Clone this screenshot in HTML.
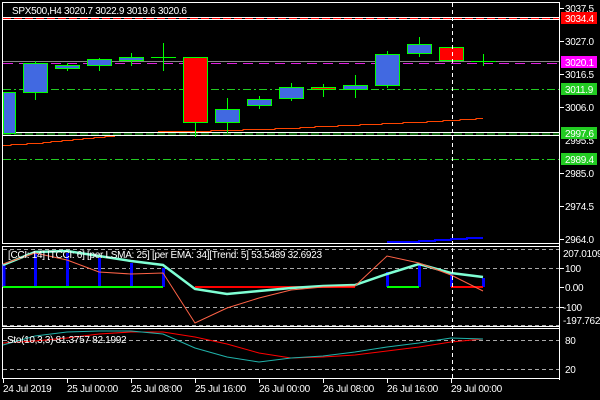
<!DOCTYPE html>
<html><head><meta charset="utf-8"><style>
html,body{margin:0;padding:0;background:#000;width:600px;height:400px;overflow:hidden}
svg{display:block}
text{font-family:"Liberation Sans",sans-serif;font-size:10px;fill:#fff;letter-spacing:-0.3px}
line,rect{shape-rendering:crispEdges}
</style></head><body>
<svg width="600" height="400" xmlns="http://www.w3.org/2000/svg">
<rect width="600" height="400" fill="#000"/>
<g fill="none" stroke="#fff" stroke-width="1">
<rect x="2.5" y="2.5" width="557" height="241"/>
<rect x="2.5" y="246.5" width="557" height="80"/>
<rect x="2.5" y="328.5" width="557" height="50"/>
</g>
<line x1="3" y1="17.5" x2="559" y2="17.5" stroke="#fff"/>
<line x1="3" y1="19.5" x2="559" y2="19.5" stroke="#fff"/>
<line x1="3" y1="18.5" x2="559" y2="18.5" stroke="#f00" stroke-dasharray="8,3"/>
<line x1="3" y1="61.5" x2="559" y2="61.5" stroke="#888"/>
<line x1="3" y1="63.5" x2="559" y2="63.5" stroke="#e020e0" stroke-dasharray="10,6"/>
<line x1="3" y1="89.5" x2="559" y2="89.5" stroke="#2c2" stroke-dasharray="8,3,2,3"/>
<line x1="3" y1="132.5" x2="559" y2="132.5" stroke="#fff"/>
<line x1="3" y1="135.5" x2="559" y2="135.5" stroke="#fff"/>
<line x1="3" y1="134" x2="559" y2="134" stroke="#2c2" stroke-dasharray="8,3"/>
<line x1="3" y1="159.5" x2="559" y2="159.5" stroke="#2c2" stroke-dasharray="8,3,2,3"/>
<g shape-rendering="crispEdges">
<polyline fill="none" stroke="#ff4500" stroke-width="1" points="3,145.5 11,145.5 11,144.5 27,144.5 27,143.5 43,143.5 43,142.5 51,142.5 51,141.5 62,141.5 62,140.5 73,140.5 73,139.5 83,139.5 83,138.5 94,138.5 94,137.5 105,137.5 105,136.5 115,136.5"/>
<polyline fill="none" stroke="#ff4500" stroke-width="1" points="158,131.5 211,131.5 211,130.5 243,130.5 243,129.5 275,129.5 275,128.5 300,128.5 300,127.5 315,127.5 315,126.5 338,126.5 338,125.5 360,125.5 360,124.5 382,124.5 382,123.5 403,123.5 403,122.5 427,122.5 427,121.5 443,121.5 443,120.5 460,120.5 460,119.5 476,119.5 476,118.5 483,118.5"/>
<polyline fill="none" stroke="#00f" stroke-width="2" points="387,242 419,242 419,241 435,241 435,240 451,240 451,239 467,239 467,238 483,238"/>
</g>
<g stroke="#0f0" stroke-width="1">
<rect x="3.5" y="92.5" width="12" height="41" fill="#4169e1"/>
<line x1="35.5" y1="61" x2="35.5" y2="100"/><rect x="23.5" y="63.5" width="24" height="29" fill="#4169e1"/>
<line x1="67.5" y1="63" x2="67.5" y2="71"/><rect x="55.5" y="65.5" width="24" height="3" fill="#4169e1"/>
<line x1="99.5" y1="58" x2="99.5" y2="71"/><rect x="87.5" y="59.5" width="24" height="6" fill="#4169e1"/>
<line x1="131.5" y1="53" x2="131.5" y2="66"/><rect x="119.5" y="57.5" width="24" height="3" fill="#4169e1"/>
<line x1="163.5" y1="43" x2="163.5" y2="71"/><line x1="151" y1="57.5" x2="176" y2="57.5"/>
<line x1="195.5" y1="122" x2="195.5" y2="137"/><rect x="183.5" y="57.5" width="24" height="65" fill="#f00"/>
<line x1="227.5" y1="98" x2="227.5" y2="133"/><rect x="215.5" y="109.5" width="24" height="13" fill="#4169e1"/>
<line x1="259.5" y1="96" x2="259.5" y2="109"/><rect x="247.5" y="99.5" width="24" height="6" fill="#4169e1"/>
<line x1="291.5" y1="83" x2="291.5" y2="101"/><rect x="279.5" y="87.5" width="24" height="11" fill="#4169e1"/>
<line x1="323.5" y1="84" x2="323.5" y2="97"/><rect x="311.5" y="87.5" width="24" height="2" fill="#f00"/>
<line x1="355.5" y1="75" x2="355.5" y2="98"/><rect x="343.5" y="85.5" width="24" height="4" fill="#4169e1"/>
<line x1="387.5" y1="51" x2="387.5" y2="88"/><rect x="375.5" y="54.5" width="24" height="31" fill="#4169e1"/>
<line x1="419.5" y1="37" x2="419.5" y2="57"/><rect x="407.5" y="44.5" width="24" height="9" fill="#4169e1"/>
<rect x="439.5" y="47.5" width="24" height="13" fill="#f00"/>
<line x1="483.5" y1="54" x2="483.5" y2="66"/><line x1="471" y1="61.5" x2="496" y2="61.5"/>
</g>
<text x="12" y="14">SPX500,H4  3020.7 3022.9 3019.6 3020.6</text>
<g stroke="#aaa" stroke-dasharray="4,3"><line x1="3" y1="249.5" x2="559" y2="249.5"/><line x1="3" y1="268.5" x2="559" y2="268.5"/><line x1="3" y1="307.5" x2="559" y2="307.5"/><line x1="3" y1="325.5" x2="559" y2="325.5"/></g>
<g stroke="#00f" stroke-width="3">
<line x1="4" y1="287" x2="4" y2="264"/><line x1="35.5" y1="287" x2="35.5" y2="253"/><line x1="67.5" y1="287" x2="67.5" y2="253"/><line x1="99.5" y1="287" x2="99.5" y2="258"/><line x1="131.5" y1="287" x2="131.5" y2="263"/><line x1="163.5" y1="287" x2="163.5" y2="268"/>
<line x1="387.5" y1="287" x2="387.5" y2="272"/><line x1="419.5" y1="287" x2="419.5" y2="263"/><line x1="451.5" y1="287" x2="451.5" y2="274"/><line x1="483.5" y1="287" x2="483.5" y2="278"/>
</g>
<line x1="3" y1="287" x2="163" y2="287" stroke="#0f0" stroke-width="2"/>
<line x1="387" y1="287" x2="419" y2="287" stroke="#0f0" stroke-width="2"/>
<line x1="195" y1="287" x2="355" y2="287" stroke="#f00" stroke-width="2"/>
<line x1="451" y1="287" x2="483" y2="287" stroke="#f00" stroke-width="2"/>
<polyline fill="none" stroke="#7fffd4" stroke-width="2.5" points="3,265 35,252 67,251 99,256 131,261 163,265 195,289 227,294 259,291 291,288 323,286 355,285 387,274 419,264 451,273 483,277"/>
<polyline fill="none" stroke="#ff6347" stroke-width="1" points="3,264 35,253 67,260 99,272 131,274 163,273 195,323 227,308 259,298 291,290 323,287 355,286 387,256 419,263 451,275 483,291"/>
<text x="8" y="258">[CCI: 14] [TCCI: 6] [per LSMA: 25] [per EMA: 34][Trend: 5]  53.5489 32.6923</text>
<g stroke="#aaa" stroke-dasharray="4,3"><line x1="3" y1="340.5" x2="559" y2="340.5"/><line x1="3" y1="369.5" x2="559" y2="369.5"/></g>
<polyline fill="none" stroke="#f00" points="3,343 35,341 67,338 99,334 131,332 163,332 195,337 227,344 259,353 291,358 323,357 355,355 387,351 419,347 451,342 483,339"/>
<polyline fill="none" stroke="#20b2aa" points="3,345 35,336 67,332 99,331 131,331 163,334 195,348 227,357 259,362 291,358 323,356 355,352 387,347 419,343 451,338 483,339"/>
<text x="7" y="343">Sto(10,3,3) 81.3757 82.1992</text>
<line x1="452.5" y1="3" x2="452.5" y2="380" stroke="#fff" stroke-dasharray="4,3"/>
<g stroke="#fff"><line x1="559.5" y1="2" x2="559.5" y2="380"/>
<line x1="560" y1="8.5" x2="564" y2="8.5"/><line x1="560" y1="41.5" x2="564" y2="41.5"/><line x1="560" y1="74.5" x2="564" y2="74.5"/><line x1="560" y1="107.5" x2="564" y2="107.5"/><line x1="560" y1="173.5" x2="564" y2="173.5"/><line x1="560" y1="206.5" x2="564" y2="206.5"/><line x1="560" y1="239.5" x2="564" y2="239.5"/>
<line x1="560" y1="268.5" x2="564" y2="268.5"/><line x1="560" y1="287.5" x2="564" y2="287.5"/><line x1="560" y1="307.5" x2="564" y2="307.5"/>
</g>
<text x="565" y="12">3037.5</text>
<text x="565" y="45">3027.0</text>
<text x="565" y="78">3016.5</text>
<text x="565" y="111">3006.0</text>
<text x="565" y="144">2995.5</text>
<text x="565" y="177">2985.0</text>
<text x="565" y="210">2974.5</text>
<text x="565" y="243">2964.0</text>
<rect x="561" y="12" width="36" height="12" fill="#f00"/><text x="565" y="22">3034.4</text>
<rect x="561" y="56" width="36" height="12" fill="#f0f"/><text x="565" y="66">3020.1</text>
<rect x="561" y="83" width="36" height="12" fill="#2c2"/><text x="565" y="93">3011.9</text>
<rect x="561" y="127" width="36" height="12" fill="#2c2"/><text x="565" y="137">2997.6</text>
<rect x="561" y="153" width="36" height="12" fill="#2c2"/><text x="565" y="163">2989.4</text>
<text x="563" y="257">207.0109</text>
<text x="565" y="272">100</text>
<text x="565" y="291">0.00</text>
<text x="563" y="311">-100</text>
<text x="563" y="324">-197.7624</text>
<text x="565" y="344">80</text>
<text x="565" y="373">20</text>
<g stroke="#fff"><line x1="3.5" y1="379" x2="3.5" y2="383"/><line x1="67.5" y1="379" x2="67.5" y2="383"/><line x1="131.5" y1="379" x2="131.5" y2="383"/><line x1="195.5" y1="379" x2="195.5" y2="383"/><line x1="259.5" y1="379" x2="259.5" y2="383"/><line x1="323.5" y1="379" x2="323.5" y2="383"/><line x1="387.5" y1="379" x2="387.5" y2="383"/><line x1="451.5" y1="379" x2="451.5" y2="383"/></g>
<text x="3" y="392">24 Jul 2019</text>
<text x="67" y="392">25 Jul 00:00</text>
<text x="131" y="392">25 Jul 08:00</text>
<text x="195" y="392">25 Jul 16:00</text>
<text x="259" y="392">26 Jul 00:00</text>
<text x="323" y="392">26 Jul 08:00</text>
<text x="387" y="392">26 Jul 16:00</text>
<text x="451" y="392">29 Jul 00:00</text>
</svg>
</body></html>
